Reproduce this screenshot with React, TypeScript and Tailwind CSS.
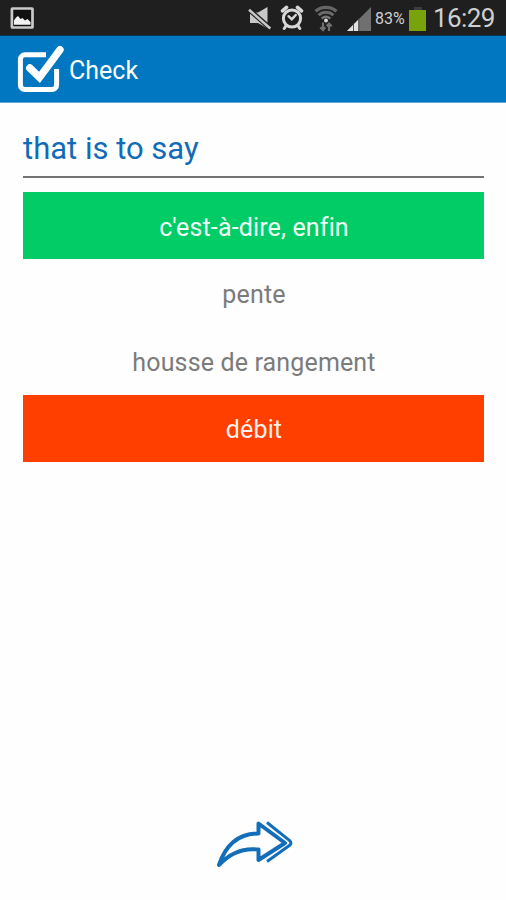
import * as React from "react";
import clsx from "clsx";

type AnswerState = "correct" | "wrong" | "idle";

const answers: { text: string; state: AnswerState }[] = [
  { text: "c'est-à-dire, enfin", state: "correct" },
  { text: "pente", state: "idle" },
  { text: "housse de rangement", state: "idle" },
  { text: "débit", state: "wrong" },
];

function PictureIcon() {
  return (
    <svg width="24" height="22" viewBox="0 0 24 22">
      <rect x="1.9" y="1.5" width="20.6" height="19" rx=".5" fill="#111" stroke="#c9c9c9" strokeWidth="2.7" />
      <path d="M4 17.8v-4.3l2-3 2-1.5 2.5 3 2-1 2.5 2.5 2.5-1.5 3 3v2.8z" fill="#f2f2f2" />
    </svg>
  );
}

function MutedIcon() {
  return (
    <svg width="24" height="24" viewBox="0 0 24 24">
      <path d="M2 5.5h8L19.5 0v21.5L10 16H2z" fill="#c8c8c8" />
      <path d="M0 1.8 24 22.8" stroke="#1f1f1f" strokeWidth="5" />
      <path d="M1 2.8 22.3 21.5" stroke="#c8c8c8" strokeWidth="2.5" />
    </svg>
  );
}

function AlarmIcon() {
  return (
    <svg width="24" height="26" viewBox="0 0 24 26" fill="none" stroke="#d8d8d8" strokeLinecap="round">
      <circle cx="12" cy="13.5" r="8.6" strokeWidth="3" />
      <path d="M2.5 5.8 6.5 2.4M21.5 5.8 17.5 2.4" strokeWidth="3.6" />
      <path d="m6.2 20.5-2 3M17.8 20.5l2 3" strokeWidth="3" />
      <path d="m8.5 11.2 3.3 3 4-4.2" strokeWidth="2.4" />
    </svg>
  );
}

function WifiIcon() {
  return (
    <svg width="24" height="27" viewBox="0 0 24 27" fill="none">
      <path d="M1.5 6.3c6-5.2 15-5.2 21 0" stroke="#666" strokeWidth="3.4" />
      <path d="M4.6 10.2c4.4-3.8 10.4-3.8 14.8 0" stroke="#6c6c6c" strokeWidth="3" />
      <path d="M7.7 13.6c2.6-2.2 6-2.2 8.6 0" stroke="#777" strokeWidth="2.5" />
      <circle cx="12" cy="15.5" r="1.9" fill="#ddd" />
      <path d="M9 17.5V25M6.3 22.2 9 25l2.3-2.8M15 26v-7.5M12.7 21.2 15 18.5l2.7 2.7" stroke="#707070" strokeWidth="2.2" />
    </svg>
  );
}

function SignalIcon() {
  return (
    <svg width="24" height="24" viewBox="0 0 24 24">
      <path d="M0 24 24 0v24z" fill="#707070" />
      <path d="M0 24 11.5 12.5V24z" fill="#e2e2e2" />
      <path d="M6.5 16v8M11.8 11v13" stroke="#444" strokeWidth=".9" />
    </svg>
  );
}

function StatusBar() {
  return (
    <div className="flex h-[35px] items-start bg-[#1f1f1f] text-[#cfcfcf]">
      <div className="ml-[10px] mt-[7px]">
        <PictureIcon />
      </div>
      <div className="ml-[214px] mt-[7px]">
        <MutedIcon />
      </div>
      <div className="ml-[8px] mt-[5px]">
        <AlarmIcon />
      </div>
      <div className="ml-[10px] mt-[5px]">
        <WifiIcon />
      </div>
      <div className="ml-[9px] mt-[7px]">
        <SignalIcon />
      </div>
      <span className="ml-[4px] mt-[9px] w-[31px] text-[16px] leading-[20px] whitespace-nowrap">83%</span>
      <div className="ml-[3px] mt-[7px] flex flex-col items-center">
        <div className="h-[3px] w-[8px] bg-[#3c3c3c]" />
        <div className="h-[21px] w-[17px] bg-[#78a30b]" />
      </div>
      <span className="ml-[7px] mt-[2px] text-[26px] leading-[32px] tracking-[-0.6px] whitespace-nowrap">16:29</span>
    </div>
  );
}

function TitleBar() {
  return (
    <header className="flex h-[66px] items-center bg-[#0077c0] pl-[10px]">
      <svg className="mt-[2px]" width="56" height="60" viewBox="0 0 56 60" fill="none" stroke="#fff">
        <path d="M36 14.8H15a4.6 4.6 0 0 0-4.6 4.6V45a4.6 4.6 0 0 0 4.6 4.6h27a4.6 4.6 0 0 0 4.6-4.6V29" strokeWidth="5" />
        <path d="m19.8 28 9.7 9.5L50 9.7" strokeWidth="7.4" strokeLinecap="round" />
      </svg>
      <h1 className="ml-[3px] pt-[3px] text-[25px] leading-[30px] text-white">Check</h1>
    </header>
  );
}

function Answer({ text, state }: { text: string; state: AnswerState }) {
  return (
    <button
      className={clsx(
        "flex h-[67px] w-full items-center justify-center pt-[3px] pl-px text-[25px] tracking-[0.15px]",
        state === "correct" && "bg-[#02cc66] text-[#effff4]",
        state === "wrong" && "bg-[#ff3f00] text-[#fff0ea]",
        state === "idle" && "text-[#7b7b7b]"
      )}
    >
      {text}
    </button>
  );
}

function NextArrow() {
  return (
    <svg width="100" height="70" viewBox="0 0 100 70" fill="none" stroke="#126eb9" strokeLinejoin="round">
      <path d="M14 55C20 37 32 23.5 53.5 23.5V13.5L80 33 53.5 50V39.5C37 37.5 25 43 14 55Z" strokeWidth="4" />
      <path d="m62 12.5 22.7 18.2q2.4 2.3 0 4.6L62 51.5" strokeWidth="3" />
    </svg>
  );
}

export default function App() {
  return (
    <div className="flex h-[900px] w-[506px] flex-col bg-[#fefefe] font-['Roboto',sans-serif]">
      <StatusBar />
      <div className="h-px bg-[#07385a]" />
      <TitleBar />
      <div className="h-px bg-[#5ea9d8]" />
      <main className="flex flex-1 flex-col pl-[23px] pr-[22px]">
        <h2 className="h-[75px] border-b-2 border-[#737373] pt-[28px] text-[31px] leading-[36px] text-[#126bb8]">
          that is to say
        </h2>
        <div className="mt-[14.4px] flex flex-col gap-[0.6px]">
          {answers.map((answer) => (
            <Answer key={answer.text} {...answer} />
          ))}
        </div>
      </main>
      <footer className="flex h-[90px] pl-[205px]">
        <NextArrow />
      </footer>
    </div>
  );
}
